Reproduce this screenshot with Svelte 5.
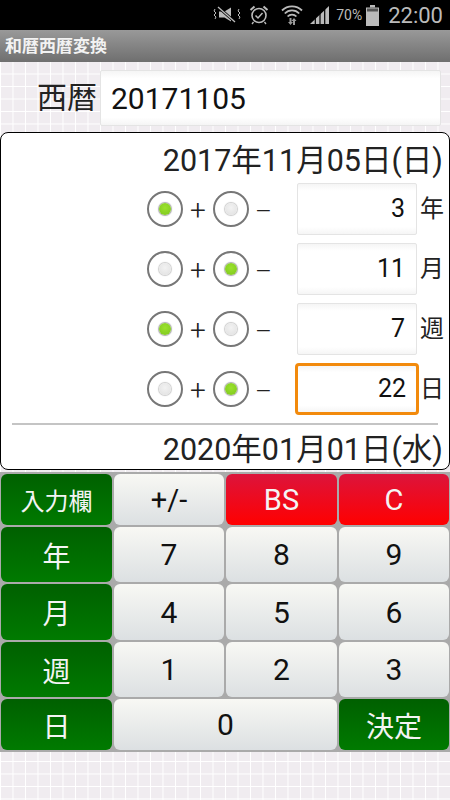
<script>
  const rows = [
    { plus: true, value: '3', unit: '年' },
    { plus: false, value: '11', unit: '月' },
    { plus: true, value: '7', unit: '週' },
    { plus: false, value: '22', unit: '日', active: true }
  ];

  const keys = [
    { label: '入力欄', kind: 'green small' },
    { label: '+/-', kind: 'small' },
    { label: 'BS', kind: 'red small' },
    { label: 'C', kind: 'red small' },
    { label: '年', kind: 'green' },
    { label: '7' }, { label: '8' }, { label: '9' },
    { label: '月', kind: 'green' },
    { label: '4' }, { label: '5' }, { label: '6' },
    { label: '週', kind: 'green' },
    { label: '1' }, { label: '2' }, { label: '3' },
    { label: '日', kind: 'green' },
    { label: '0', kind: 'wide' },
    { label: '決定', kind: 'green' }
  ];
</script>

<div class="screen">
  <div class="statusbar">
    <svg class="ic" width="30" height="20" viewBox="0 0 30 20">
      <path d="M6 6.500h5.500L18 2.500v14l-6.500-4H6z" fill="#bbb" />
      <path d="M5 2l17 15" stroke="#000" stroke-width="3" />
      <path d="M5 2l17 15" stroke="#bbb" stroke-width="1.300" />
      <path d="M2 4l-1 2 2 2-2 2 2 2-1 2M26 4l-1 2 2 2-2 2 2 2-1 2" fill="none" stroke="#bbb" stroke-width="1" />
    </svg>
    <svg class="ic" width="20" height="20" viewBox="0 0 20 20">
      <circle cx="10" cy="10.500" r="7" fill="none" stroke="#bbb" stroke-width="1.600" />
      <path d="M6.500 10.500l2.500 2.500 4.500-5" fill="none" stroke="#bbb" stroke-width="1.500" />
      <path d="M1.500 5l4-3.500M18.500 5l-4-3.500" stroke="#bbb" stroke-width="2" />
      <path d="M4.500 17l-1.500 2M15.500 17l1.500 2" stroke="#bbb" stroke-width="1.300" />
    </svg>
    <svg class="ic wifi" width="22" height="22" viewBox="0 0 22 22">
      <path d="M1 6.500a14 14 0 0 1 20 0M3.800 9.500a10 10 0 0 1 14.400 0M6.600 12.500a6 6 0 0 1 8.800 0" fill="none" stroke="#bbb" stroke-width="1.800" />
      <path d="M8.500 14h2v4h1.500l-2.500 3-2.500-3h1.500zM12 21v-4h-1.500l2.500-3 2.500 3H14v4z" fill="#999" />
    </svg>
    <svg class="ic signal" width="20" height="20" viewBox="0 0 20 20">
      <path d="M0 19l19-18v18z" fill="#bbb" />
      <path d="M5.300 10v10M10 6v14M14.700 2v18" stroke="#000" stroke-width="1.200" />
    </svg>
    <span class="pct">70%</span>
    <svg class="ic" width="13" height="21" viewBox="0 0 13 21">
      <path d="M4 0h5v2.500H4z" fill="#bbb" />
      <path d="M0 2.500h13V21H0z" fill="#bbb" />
      <path d="M1 3.500h11v3H1z" fill="#555" />
    </svg>
    <span class="clock">22:00</span>
  </div>

  <div class="titlebar">和暦西暦変換</div>

  <div class="page">
    <div class="top">
      <span class="top-label">西暦</span>
      <div class="field top-field">20171105</div>
    </div>

    <div class="card">
      <div class="date">2017年11月05日(日)</div>
      {#each rows as row}
        <div class="row">
          <span class="radio" class:on={row.plus}><i></i></span>
          <span class="sign">+</span>
          <span class="radio" class:on={!row.plus}><i></i></span>
          <span class="sign minus">–</span>
          <div class="field num" class:active={row.active}>{row.value}</div>
          <span class="unit">{row.unit}</span>
        </div>
      {/each}
      <div class="divider"></div>
      <div class="date result">2020年01月01日(水)</div>
    </div>

    <div class="keypad">
      {#each keys as key}
        <div class="key {key.kind ?? ''}">{key.label}</div>
      {/each}
    </div>
  </div>
</div>

<style>
  :global(body) {
    margin: 0;
  }

  .screen {
    width: 450px;
    height: 800px;
    overflow: hidden;
    font-family: Roboto, "Noto Sans CJK JP", sans-serif;
    color: #111;
  }

  .statusbar {
    height: 30px;
    background: #000;
    display: flex;
    align-items: center;
    justify-content: flex-end;
    color: #bbb;
  }

  .ic {
    display: block;
    margin-right: 6px;
  }

  .wifi {
    margin-left: 6px;
    margin-right: 7px;
  }

  .signal {
    margin-right: 7px;
  }

  .pct {
    font-size: 14px;
    margin-left: -1px;
    margin-right: 4px;
  }

  .clock {
    font-size: 22px;
    margin-left: 3px;
    margin-right: 7px;
  }

  .titlebar {
    height: 32px;
    box-sizing: border-box;
    padding: 0 0 0 5px;
    background: linear-gradient(#999, #6f6f6f);
    color: #f2f2f2;
    font-size: 17px;
    font-weight: 700;
    line-height: 32px;
  }

  .page {
    height: 738px;
    background-color: #f0ecf0;
    background-image:
      linear-gradient(90deg, #fff 1px, transparent 1px),
      linear-gradient(#fff 1px, transparent 1px);
    background-size: 12.5px 12.5px;
    background-position: 0 11.5px;
  }

  .top {
    height: 70px;
    display: flex;
    align-items: flex-start;
    box-sizing: border-box;
    padding: 8px 9px 0 0;
  }

  .top-label {
    width: 97px;
    text-align: right;
    font-size: 30px;
    line-height: 56px;
    color: #222;
  }

  .field {
    box-sizing: border-box;
    background: linear-gradient(#f5f5f5, #fff 14%, #fff 86%, #f5f5f5);
    border: 1px solid #e4e4e4;
    border-radius: 2px;
  }

  .top-field {
    margin-left: 3px;
    flex: 1;
    height: 56px;
    font-size: 30px;
    line-height: 56px;
    padding-left: 10px;
    color: #111;
  }

  .card {
    height: 338px;
    box-sizing: border-box;
    margin-bottom: 2px;
    background: #fff;
    border: 1px solid #000;
    border-radius: 8px;
    display: flex;
    flex-direction: column;
  }

  .date {
    height: 46px;
    padding-right: 6px;
    font-size: 30.5px;
    line-height: 56px;
    text-align: right;
    color: #222;
    white-space: nowrap;
  }

  .row {
    height: 60px;
    flex: none;
    display: flex;
    align-items: center;
    padding-left: 146px;
  }

  .radio {
    box-sizing: border-box;
    width: 36px;
    height: 36px;
    border: 2px solid #777;
    border-radius: 50%;
    background: #fff;
    display: flex;
    align-items: center;
    justify-content: center;
    flex: none;
  }

  .radio i {
    display: block;
    width: 12px;
    height: 12px;
    border-radius: 50%;
    background: radial-gradient(circle at 50% 40%, #f2f2f2, #e0e0e0);
    box-shadow: 0 0 1px 1px #ccc;
  }

  .radio.on i {
    background: radial-gradient(circle at 50% 40%, #9be22d, #7cc51c);
    box-shadow: 0 0 1px 1px #aaa;
  }

  .sign {
    width: 30px;
    text-align: center;
    font-size: 28px;
    font-weight: 300;
    line-height: 36px;
    padding-top: 4px;
    flex: none;
    color: #222;
  }

  .minus {
    width: 42px;
    text-align: left;
    padding-left: 6px;
    box-sizing: content-box;
    font-size: 26px;
  }

  .num {
    width: 120px;
    height: 52px;
    margin-right: 3px;
    flex: none;
    font-size: 25px;
    line-height: 50px;
    text-align: right;
    padding-right: 11px;
  }

  .num.active {
    width: 124px;
    margin-left: -2px;
    margin-right: 1px;
    border: 3px solid #f28a0c;
    border-radius: 4px;
    line-height: 46px;
    padding-right: 10px;
  }

  .unit {
    font-size: 24px;
    line-height: 36px;
    color: #222;
  }

  .divider {
    height: 2px;
    margin: 4px 11px 0;
    background: #c4c4c4;
    flex: none;
  }

  .result {
    height: auto;
    line-height: 50px;
  }

  .keypad {
    height: 280px;
    box-sizing: border-box;
    padding: 2px 1px;
    background: #aaa;
    display: grid;
    grid-template-columns: 111px 110px 111px 110px;
    grid-template-rows: 51px 55px 56px 55px 51px;
    gap: 2px 2px;
  }

  .key {
    border-radius: 6px;
    background: linear-gradient(#f8f8f4, #dce0e2);
    display: flex;
    align-items: center;
    justify-content: center;
    font-size: 30px;
    color: #111;
  }

  .key.small {
    font-size: 29px;
  }

  .key.green {
    background: linear-gradient(#006000, #007a00);
    color: #f4f4f4;
    font-size: 28px;
  }

  .key.green.small {
    font-size: 24px;
  }

  .key.red {
    background: linear-gradient(#dc143c, #ff0000);
    color: #f4f4f4;
  }

  .key.wide {
    grid-column: span 2;
  }
</style>
